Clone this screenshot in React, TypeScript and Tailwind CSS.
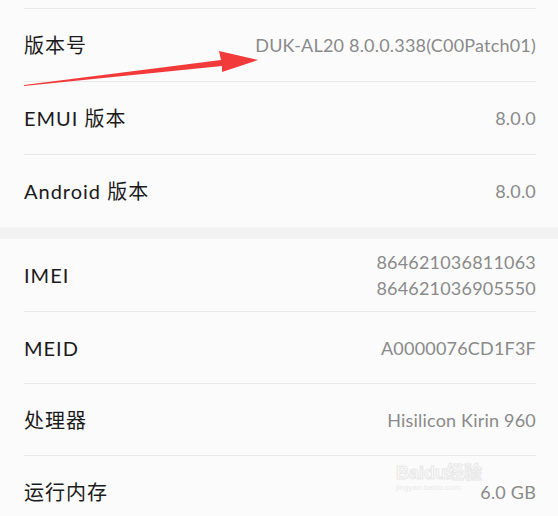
import React from "react";

const latin = "font-['Lato','Noto_Sans_CJK_SC',sans-serif]";

type Row = { label: string; values: string[] };

const topRows: Row[] = [
  { label: "版本号", values: ["DUK-AL20 8.0.0.338(C00Patch01)"] },
  { label: "EMUI 版本", values: ["8.0.0"] },
  { label: "Android 版本", values: ["8.0.0"] },
];

const bottomRows: Row[] = [
  { label: "IMEI", values: ["864621036811063", "864621036905550"] },
  { label: "MEID", values: ["A0000076CD1F3F"] },
  { label: "处理器", values: ["Hisilicon Kirin 960"] },
  { label: "运行内存", values: ["6.0 GB"] },
];

function InfoRow({ row, first }: { row: Row; first?: boolean }) {
  return (
    <div
      className={`flex items-center justify-between h-[72px] ${
        first ? "" : "border-t border-[#e9e9e9]"
      }`}
    >
      <span className="text-[20px] text-[#1a1a1a] tracking-[1px]">{row.label}</span>
      <div className="flex flex-col items-end gap-[6px] text-[18px] tracking-[0.2px] text-[#8a8a8a] leading-[20px]">
        {row.values.map((v) => (
          <span key={v}>{v}</span>
        ))}
      </div>
    </div>
  );
}

export default function App() {
  return (
    <div className={`relative w-[558px] h-[516px] overflow-hidden bg-[#fbfbfb] ${latin}`}>
      {/* 上半部分 */}
      <div className="pl-[24px] pr-[22px]">
        <div className="h-[8px]" />
        {topRows.map((r) => (
          <div key={r.label} className="border-t border-[#e9e9e9]">
            <InfoRow row={r} first />
          </div>
        ))}
      </div>

      {/* 分组间隔 */}
      <div className="h-[12px] bg-[#f2f2f2]" />

      {/* 下半部分 */}
      <div className="pl-[24px] pr-[22px]">
        {bottomRows.map((r, i) => (
          <InfoRow key={r.label} row={r} first={i === 0} />
        ))}
      </div>

      {/* 红色箭头 */}
      <svg
        className="absolute inset-0 pointer-events-none"
        width="558"
        height="516"
        viewBox="0 0 558 516"
      >
        <polygon
          points="24,85 221,60 219,51 258,60 222,72 222,66 24,86"
          fill="#f23a3a"
        />
      </svg>

      {/* 水印 */}
      <div className="absolute left-[396px] top-[461px] flex flex-col items-start pointer-events-none opacity-60">
        <span className="text-[18px] font-bold leading-[20px] text-transparent [-webkit-text-stroke:1px_#dcdcdc] font-['Liberation_Sans',sans-serif]">
          Baidu<span className="font-['Noto_Sans_CJK_SC',sans-serif]">经验</span>
        </span>
        <span className="text-[8px] leading-[10px] text-[#e0e0e0] font-['Liberation_Sans',sans-serif]">
          jingyan.baidu.com
        </span>
      </div>
    </div>
  );
}
